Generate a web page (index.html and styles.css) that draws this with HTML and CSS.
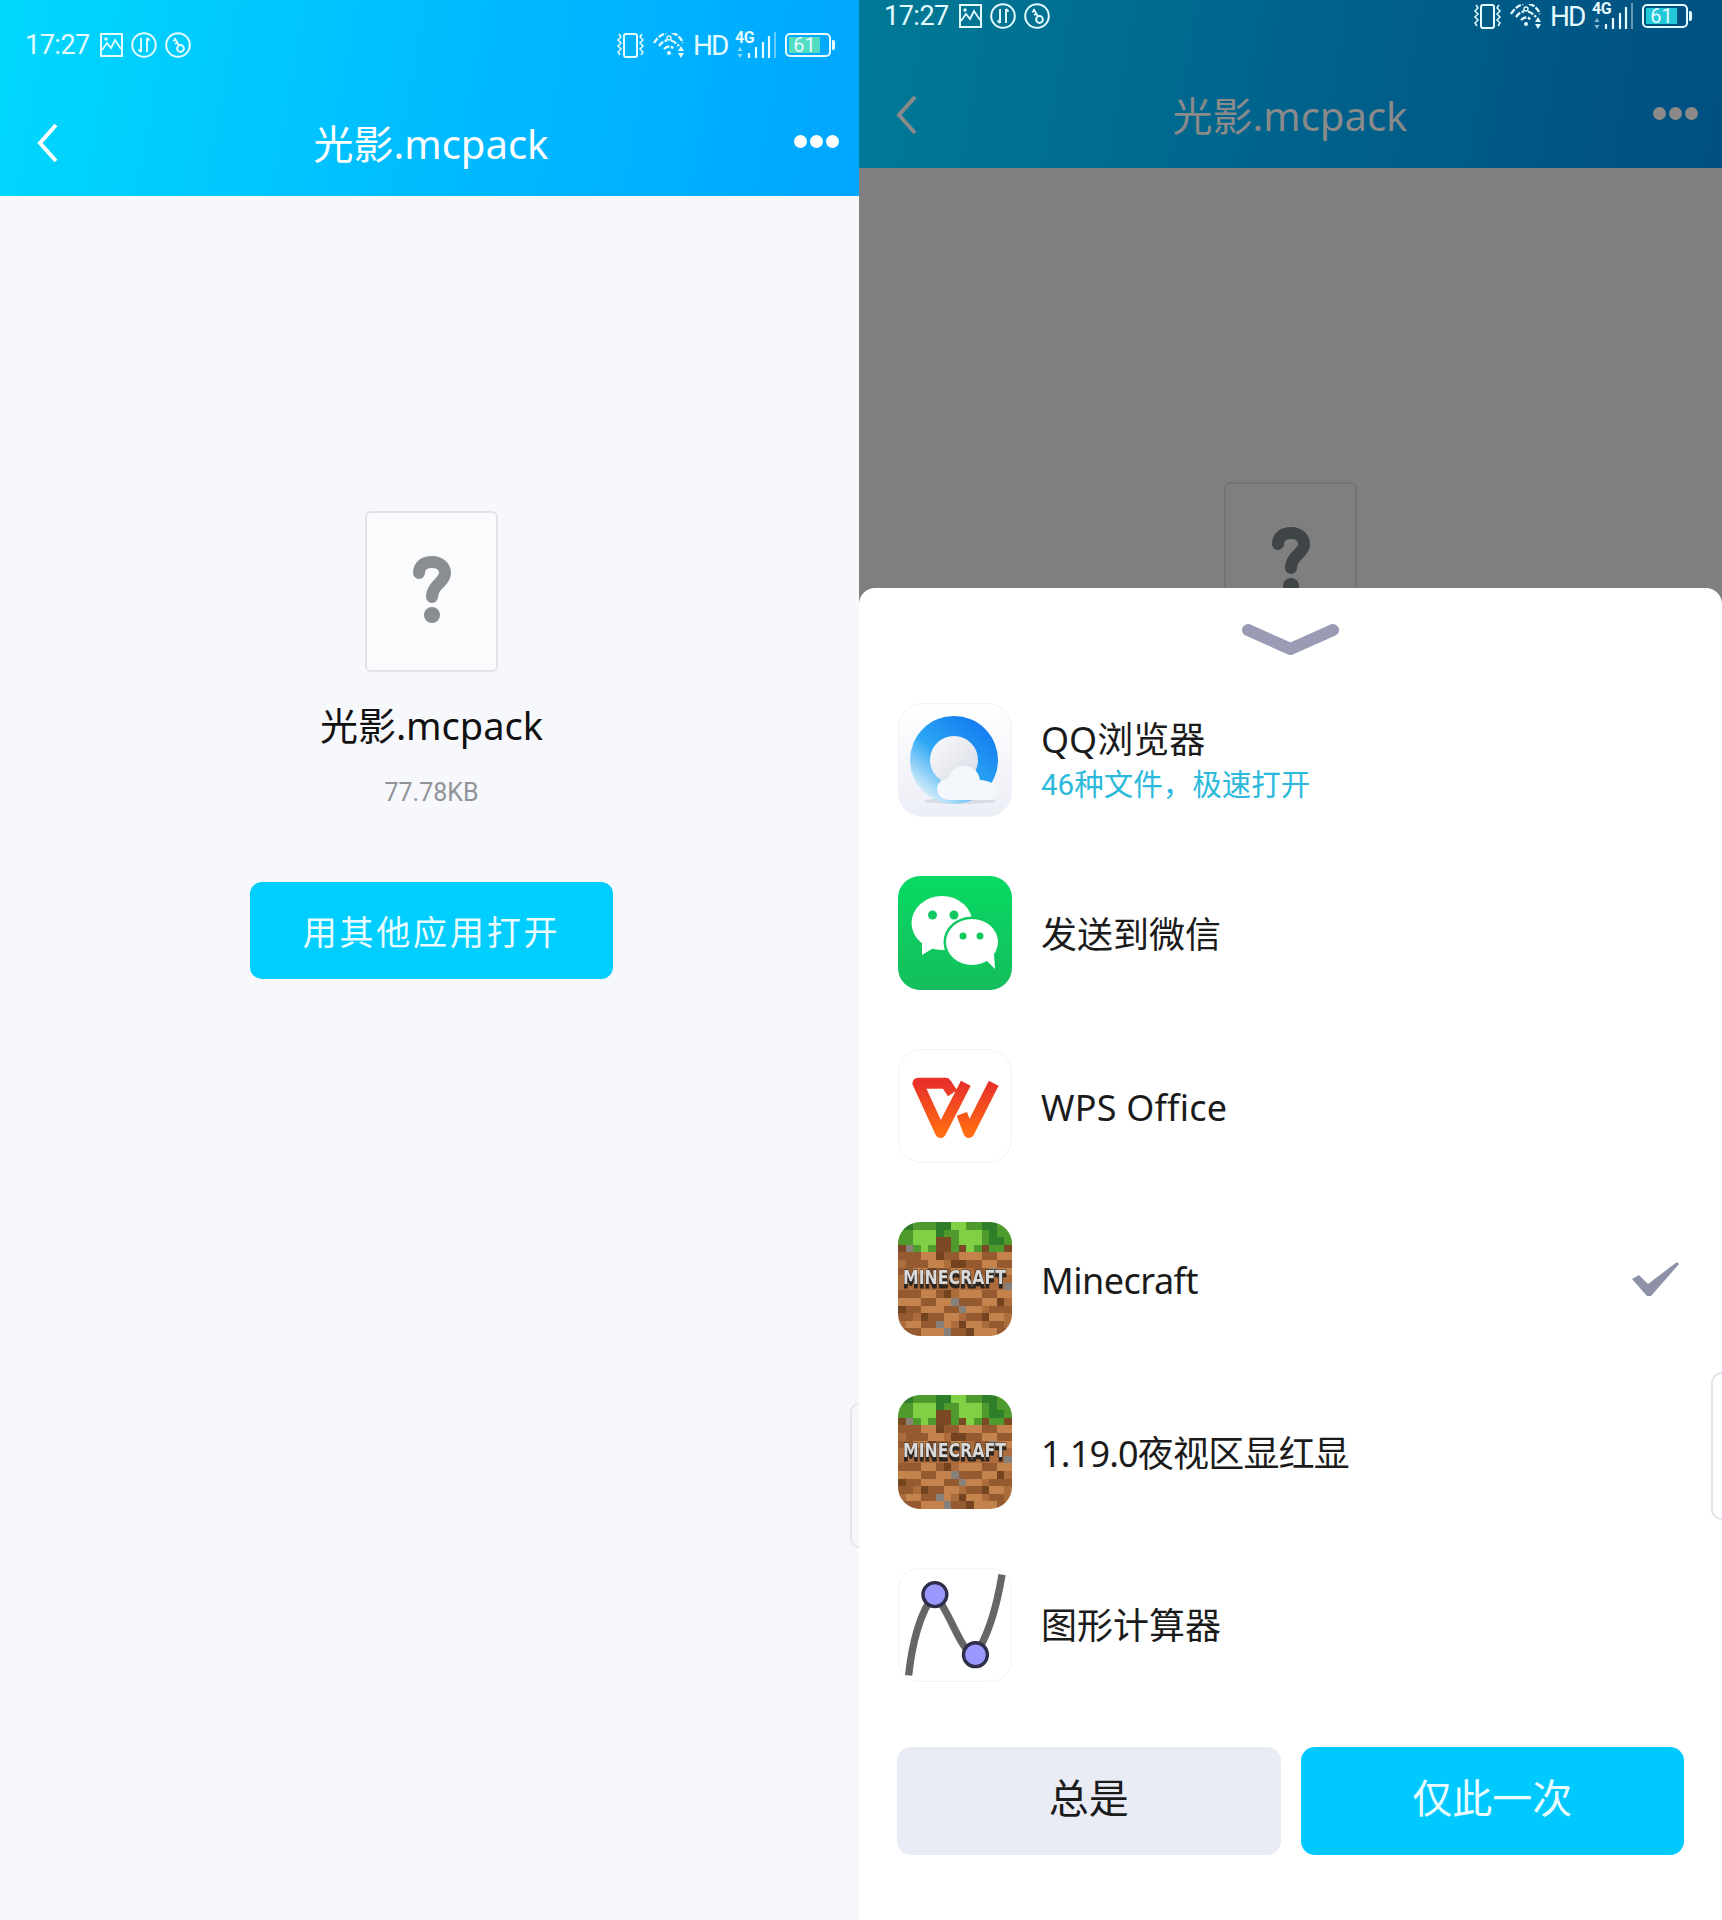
FILE: index.html
```html
<!DOCTYPE html>
<html lang="zh-CN">
<head>
  <meta charset="UTF-8" />
  <meta name="viewport" content="width=device-width, initial-scale=1.0" />
  <title>光影.mcpack</title>
  <link rel="stylesheet" href="styles.css">
</head>
<body>
  <svg class="sprites" width="0" height="0">
    <defs>
      <symbol id="sb-image" viewBox="0 0 23 24">
        <rect x="1" y="1" width="21" height="22" fill="none" stroke="currentColor" stroke-width="2"/>
        <path d="M2 17l5-7 4 5 4-8 6 9" fill="none" stroke="currentColor" stroke-width="1.800"/>
        <circle cx="6" cy="6" r="1.700" fill="currentColor"/>
      </symbol>
      <symbol id="sb-updown" viewBox="0 0 26 26">
        <circle cx="13" cy="13" r="11.800" fill="none" stroke="currentColor" stroke-width="2"/>
        <path d="M10 6v14M7.500 17.500l2.500 2.500M16 20V6M18.500 8.500L16 6" fill="none" stroke="currentColor" stroke-width="1.900"/>
      </symbol>
      <symbol id="sb-key" viewBox="0 0 26 26">
        <circle cx="13" cy="13" r="11.800" fill="none" stroke="currentColor" stroke-width="2"/>
        <circle cx="15.500" cy="16.500" r="3.400" fill="none" stroke="currentColor" stroke-width="2"/>
        <path d="M14 13.500L9.500 6M8 9l3-1.500M10 12l3-1.500" fill="none" stroke="currentColor" stroke-width="1.900"/>
      </symbol>
      <symbol id="sb-vibrate" viewBox="0 0 29 25">
        <rect x="8" y="1" width="13" height="23" rx="2" fill="none" stroke="currentColor" stroke-width="2"/>
        <path d="M3 1l2 3-3 3 3 3-3 3 3 3-3 3 2 3M26 1l-2 3 3 3-3 3 3 3-3 3 3 3-2 3" fill="none" stroke="currentColor" stroke-width="1.500"/>
      </symbol>
      <symbol id="sb-wifi" viewBox="0 0 32 25">
        <path d="M1 10C6 2 11 1 13 0M19 0c4 1 8 3 11 10M6 13c3-4 5-5 8-5.500M18 7.500c3 1 6 3 8 5.500M11 16c2-2 3-2.500 5-2.500s3 .5 4 2" fill="none" stroke="currentColor" stroke-width="2.300" stroke-dasharray="6 1.500"/>
        <circle cx="16" cy="5" r="2" fill="none" stroke="currentColor" stroke-width="1.400"/>
        <circle cx="16" cy="20" r="2" fill="currentColor"/>
        <path d="M28 13l3 5h-6zM28 25l3-5h-6z" fill="currentColor"/>
      </symbol>
      <symbol id="sb-bars" viewBox="0 0 36 22">
        <path d="M5 11l2.500 4h-5zM5 22l2.500-4h-5z" fill="currentColor" opacity=".6"/>
        <path d="M14 22v-5M21 22V11M28 22V6M34 22V0" stroke="currentColor" stroke-width="2.200"/>
      </symbol>

      <symbol id="mc-icon" viewBox="0 0 114 114">
        <svg x="0" y="0" width="114" height="114" viewBox="0 0 15 15" shape-rendering="crispEdges">
          <rect width="15" height="15" fill="#ad6c3c"/>
          <g fill="none" stroke-width="1">
            <path stroke="#955a30" d="M0 4.500h3M6 4.500h2M11 4.500h2M1 5.500h3M9 5.500h2M13 5.500h2M0 6.500h2M5 6.500h2M10 6.500h3M0 9.500h3M5 9.500h2M11 9.500h3M3 10.500h2M8 10.500h3M1 11.500h2M6 11.500h3M12 11.500h3M0 12.500h2M4 12.500h2M9 12.500h3M3 13.500h2M12 13.500h2M0 14.500h3M7 14.500h2M13 14.500h2"/>
            <path stroke="#74431f" d="M5 4.500h1M7 5.500h2M4 6.500h1M6 9.500h1M13 10.500h1M0 11.500h1M3 12.500h1M11 12.500h1M8 13.500h1M9 14.500h1"/>
            <path stroke="#c4834c" d="M3 4.500h2M8 4.500h3M13 4.500h2M4 5.500h2M11 5.500h2M2 6.500h2M7 6.500h2M13 6.500h2M3 9.500h2M8 9.500h3M13 9.500h2M0 10.500h3M5 10.500h2M11 10.500h2M3 11.500h3M9 11.500h2M6 12.500h2M12 12.500h2M1 13.500h2M5 13.500h2M9 13.500h2M3 14.500h3M10 14.500h3"/>
            <path stroke="#88807a" d="M1 3.500h1M12 6.500h1M7 10.500h1M8 11.500h1M5 13.500h1M6 14.500h1M14 8.500h1"/>
            <path stroke="#4f9a2c" d="M0 0.500h15M0 1.500h15M0 2.500h5M7 2.500h8M2 3.500h3M7 3.500h1M9 3.500h2M12 3.500h2"/>
            <path stroke="#7fd044" d="M7 0.500h2M2 1.500h3M8 1.500h3M2 2.500h3M8 2.500h3M3 3.500h1M9 3.500h1"/>
            <path stroke="#2f7f2a" d="M0 0.500h2M5 0.500h2M11 0.500h2M5 1.500h1M12 2.500h2M12 1.500h1"/>
            <path stroke="#7b4a25" d="M5 2.500h2M0 3.500h1M5 3.500h2M8 3.500h1M11 3.500h1M14 3.500h1"/>
          </g>
        </svg>
        <text class="mc-word" x="5" y="62" textLength="103" lengthAdjust="spacingAndGlyphs">MINECRAFT</text>
      </symbol>
    </defs>
  </svg>

  <div class="screen">
    <section class="panel panel-file">
      <header class="topbar">
        <div class="status">
          <span class="status-time">17:27</span>
          <svg class="sb-image"><use href="#sb-image"/></svg>
          <svg class="sb-circle"><use href="#sb-updown"/></svg>
          <svg class="sb-circle"><use href="#sb-key"/></svg>
          <span class="status-gap"></span>
          <svg class="sb-vibrate"><use href="#sb-vibrate"/></svg>
          <svg class="sb-wifi"><use href="#sb-wifi"/></svg>
          <span class="status-hd">HD</span>
          <span class="status-signal"><b>4G</b><svg class="sb-bars"><use href="#sb-bars"/></svg></span>
          <span class="status-divider"></span>
          <span class="battery"><span class="battery-level">61</span></span>
        </div>
        <nav class="navbar">
          <svg class="nav-back" viewBox="0 0 21 40"><path d="M19 2L3 20l16 18" fill="none" stroke="currentColor" stroke-width="4"/></svg>
          <h1 class="nav-title">光影.mcpack</h1>
          <span class="nav-more"><i></i><i></i><i></i></span>
        </nav>
      </header>

      <main class="file-view">
        <div class="file-card">
          <svg class="file-mark" viewBox="0 0 38 67"><path d="M6 17C6 9 12 6 19 6c8 0 13 5 13 11 0 7-7 10-10 15-2 3-3 5-3 9" fill="none" stroke="currentColor" stroke-width="12" stroke-linecap="round"/><circle cx="19" cy="59" r="8" fill="currentColor"/></svg>
        </div>
        <p class="file-name">光影.mcpack</p>
        <p class="file-size">77.78KB</p>
        <button class="open-btn">用其他应用打开</button>
      </main>
      <div class="side-handle"></div>
    </section>

    <section class="panel panel-chooser">
      <header class="topbar">
        <div class="status">
          <span class="status-time">17:27</span>
          <svg class="sb-image"><use href="#sb-image"/></svg>
          <svg class="sb-circle"><use href="#sb-updown"/></svg>
          <svg class="sb-circle"><use href="#sb-key"/></svg>
          <span class="status-gap"></span>
          <svg class="sb-vibrate"><use href="#sb-vibrate"/></svg>
          <svg class="sb-wifi"><use href="#sb-wifi"/></svg>
          <span class="status-hd">HD</span>
          <span class="status-signal"><b>4G</b><svg class="sb-bars"><use href="#sb-bars"/></svg></span>
          <span class="status-divider"></span>
          <span class="battery"><span class="battery-level">61</span></span>
        </div>
        <nav class="navbar">
          <svg class="nav-back" viewBox="0 0 21 40"><path d="M19 2L3 20l16 18" fill="none" stroke="currentColor" stroke-width="4"/></svg>
          <h1 class="nav-title">光影.mcpack</h1>
          <span class="nav-more"><i></i><i></i><i></i></span>
        </nav>
      </header>

      <div class="dim-area">
        <div class="file-card">
          <svg class="file-mark" viewBox="0 0 38 67"><path d="M6 17C6 9 12 6 19 6c8 0 13 5 13 11 0 7-7 10-10 15-2 3-3 5-3 9" fill="none" stroke="currentColor" stroke-width="12" stroke-linecap="round"/><circle cx="19" cy="59" r="8" fill="currentColor"/></svg>
        </div>
      </div>

      <div class="sheet">
        <div class="sheet-head">
          <svg class="sheet-chevron" viewBox="0 0 97 31"><path d="M6 6l42.500 19L91 6" fill="none" stroke="#9a9bb5" stroke-width="12" stroke-linecap="round"/></svg>
        </div>

        <ul class="app-list">
          <li class="app-row">
            <svg class="app-icon" viewBox="0 0 114 114">
              <defs>
                <linearGradient id="qq-tile" x1="0" y1="0" x2="0" y2="1"><stop offset="0" stop-color="#fff"/><stop offset="1" stop-color="#eceef6"/></linearGradient>
                <linearGradient id="qq-ring" x1=".9" y1=".1" x2=".2" y2=".95"><stop offset="0" stop-color="#1279f0"/><stop offset=".55" stop-color="#2ba6f4"/><stop offset="1" stop-color="#dff1fb"/></linearGradient>
                <linearGradient id="qq-core" x1="0" y1="0" x2="1" y2="1"><stop offset="0" stop-color="#fbfbfd"/><stop offset="1" stop-color="#d7dae4"/></linearGradient>
              </defs>
              <rect x=".5" y=".5" width="113" height="113" rx="24" fill="url(#qq-tile)" stroke="#f1f2f7"/>
              <ellipse cx="62" cy="98" rx="36" ry="3" fill="#d9dbe6"/>
              <circle cx="56" cy="57" r="44" fill="url(#qq-ring)"/>
              <circle cx="56" cy="57" r="24" fill="url(#qq-core)"/>
              <path d="M52 97c-8 0-13-5-13-11s5-10 11-10c2-8 8-13 16-13 9 0 15 6 16 14 9 0 18 5 18 11 0 6-5 9-11 9z" fill="#f4f8fc"/>
            </svg>
            <div class="app-text">
              <span class="app-name">QQ浏览器</span>
              <span class="app-note">46种文件，极速打开</span>
            </div>
          </li>

          <li class="app-row">
            <svg class="app-icon" viewBox="0 0 114 114">
              <defs>
                <linearGradient id="wx-tile" x1="0" y1="0" x2="0" y2="1"><stop offset="0" stop-color="#08da64"/><stop offset="1" stop-color="#14bd5b"/></linearGradient>
              </defs>
              <rect width="114" height="114" rx="22" fill="url(#wx-tile)"/>
              <ellipse cx="44" cy="47" rx="30.500" ry="27" fill="#fff"/>
              <path d="M24 66l0 13 13-8z" fill="#fff"/>
              <circle cx="34.500" cy="39" r="4.500" fill="#10c860"/>
              <circle cx="56" cy="39" r="4.500" fill="#10c860"/>
              <ellipse cx="74" cy="66" rx="28.500" ry="25.500" fill="#10c860"/>
              <ellipse cx="74" cy="66" rx="26" ry="23" fill="#fff"/>
              <path d="M88 84l9 9-1-15z" fill="#fff"/>
              <circle cx="65" cy="60" r="3.500" fill="#10c860"/>
              <circle cx="82" cy="60" r="3.500" fill="#10c860"/>
            </svg>
            <div class="app-text"><span class="app-name">发送到微信</span></div>
          </li>

          <li class="app-row">
            <svg class="app-icon" viewBox="52 55 343 343">
              <defs>
                <linearGradient id="wps-a" x1="0" y1="0" x2="0" y2="1"><stop offset="0" stop-color="#e7312a"/><stop offset="1" stop-color="#ff6b12"/></linearGradient>
                <linearGradient id="wps-b" x1="0" y1="0" x2="1" y2="0"><stop offset="0" stop-color="#ff9a35"/><stop offset=".4" stop-color="#d62b20"/><stop offset="1" stop-color="#e7312a"/></linearGradient>
              </defs>
              <rect x="54" y="57" width="339" height="339" rx="70" fill="#fff" stroke="#f1f1f3" stroke-width="3"/>
              <path d="M216 188l-20-30h-84l68 148 76-148" fill="none" stroke="url(#wps-a)" stroke-width="33" stroke-linejoin="round"/>
              <path d="M244 250l21 56 75-148" fill="none" stroke="url(#wps-a)" stroke-width="33" stroke-linejoin="round"/>
              <path d="M244 158h96" fill="none" stroke="url(#wps-b)" stroke-width="33" stroke-linecap="round"/>
            </svg>
            <div class="app-text"><span class="app-name app-name-wide">WPS Office</span></div>
          </li>

          <li class="app-row">
            <span class="mc-tile"><svg class="app-icon"><use href="#mc-icon"/></svg></span>
            <div class="app-text"><span class="app-name app-name-snug">Minecraft</span></div>
            <svg class="app-check" viewBox="0 0 47 34"><polygon points="0,17 7,13 16,22 45,0 47,2 19,34 15,34" fill="#8d92a8"/></svg>
          </li>

          <li class="app-row">
            <span class="mc-tile"><svg class="app-icon"><use href="#mc-icon"/></svg></span>
            <div class="app-text"><span class="app-name app-name-tight">1.19.0夜视区显红显</span></div>
          </li>

          <li class="app-row">
            <svg class="app-icon" viewBox="52 52 343 343">
              <rect x="54" y="54" width="339" height="339" rx="60" fill="#fff" stroke="#f2f2f4" stroke-width="3"/>
              <path d="M84 375c10-95 35-195 79-243 45 50 80 181 122 181 40-60 65-150 80-241" fill="none" stroke="#666" stroke-width="22"/>
              <circle cx="163" cy="132" r="36" fill="#9a97ff" stroke="#2e2e4a" stroke-width="10"/>
              <circle cx="285" cy="313" r="36" fill="#9a97ff" stroke="#2e2e4a" stroke-width="10"/>
            </svg>
            <div class="app-text"><span class="app-name">图形计算器</span></div>
          </li>
        </ul>

        <div class="sheet-actions">
          <button class="action action-always">总是</button>
          <button class="action action-once">仅此一次</button>
        </div>
      </div>
      <div class="side-handle"></div>
    </section>
  </div>
</body>
</html>
```

FILE: styles.css
```css
* {
  box-sizing: border-box;
}

body {
  margin: 0;
  font-family: "Roboto", "Noto Sans CJK SC", sans-serif;
  background: #f7f8fb;
}

.sprites {
  position: absolute;
}

.screen {
  display: flex;
  height: 1920px;
  overflow: hidden;
}

.panel {
  position: relative;
  display: flex;
  flex-direction: column;
  height: 1920px;
}

.panel-file {
  width: 859px;
  background: #f7f8fb;
}

.panel-chooser {
  width: 863px;
  background: #7f7f7f;
}

/* header */
.topbar {
  color: #fff;
}

.panel-file .topbar {
  height: 196px;
  background: linear-gradient(100deg, #00d8fd 0%, #00bcff 50%, #00a6ff 100%);
}

.panel-chooser .topbar {
  height: 168px;
  background: linear-gradient(100deg, #007a96 0%, #00638c 50%, #004f80 100%);
}

.status {
  display: flex;
  align-items: center;
  height: 90px;
  padding: 0 25px;
  gap: 8px;
  color: #e4fbff;
}

.panel-chooser .status {
  height: 32px;
  margin-bottom: 30px;
  padding-right: 31px;
}

.status-time {
  font-size: 27px;
  margin-right: 2px;
  letter-spacing: -0.5px;
}

.sb-image {
  width: 23px;
  height: 24px;
}

.sb-circle {
  width: 26px;
  height: 26px;
}

.status-gap {
  flex: 1;
}

.sb-vibrate {
  width: 29px;
  height: 25px;
}

.sb-wifi {
  width: 32px;
  height: 25px;
}

.status-hd {
  font-size: 28px;
  letter-spacing: -2px;
  width: 34px;
}

.status-signal {
  position: relative;
  width: 36px;
  height: 26px;
  margin-right: -5px;
}

.status-signal b {
  position: absolute;
  left: 0;
  top: -2px;
  font-size: 16px;
  line-height: 16px;
  letter-spacing: -0.5px;
}

.sb-bars {
  position: absolute;
  left: 0;
  bottom: 0;
  width: 36px;
  height: 22px;
}

.status-divider {
  width: 2px;
  height: 26px;
  background: rgba(255, 255, 255, 0.4);
  margin-right: 1px;
}

.battery {
  position: relative;
  display: block;
  width: 46px;
  height: 24px;
  padding: 2px;
  border: 2px solid currentColor;
  border-radius: 5px;
  margin-right: 3px;
}

.battery::after {
  content: "";
  position: absolute;
  right: -6px;
  top: 5px;
  width: 3px;
  height: 10px;
  background: currentColor;
  border-radius: 0 2px 2px 0;
}

.battery-level {
  display: block;
  width: 31px;
  height: 16px;
  background: #52dcc2;
  color: #e4fbff;
  font-size: 20px;
  line-height: 16px;
  text-align: center;
}

.panel-chooser .battery-level {
  background: #22c8d8;
}

.navbar {
  display: grid;
  grid-template-columns: 1fr auto 1fr;
  align-items: center;
  height: 106px;
  padding: 0 20px 0 23px;
}

.panel-chooser .navbar {
  padding-right: 24px;
  color: #8a8a8a;
}

.nav-back {
  width: 21px;
  height: 40px;
  margin-left: 14px;
  margin-top: -1px;
}

.nav-title {
  margin: 2px 0 0;
  font-family: "Noto Sans", "Noto Sans CJK SC", sans-serif;
  font-size: 40px;
  font-weight: 400;
  line-height: 50px;
}

.nav-more {
  display: flex;
  justify-content: flex-end;
  gap: 3px;
  margin-top: -3px;
}

.nav-more i {
  width: 13px;
  height: 13px;
  border-radius: 50%;
  background: currentColor;
}

/* file view */
.file-view {
  display: flex;
  flex-direction: column;
  align-items: center;
  padding: 315px 0 0 4px;
}

.file-card {
  display: flex;
  align-items: flex-start;
  justify-content: center;
  flex: none;
  width: 133px;
  height: 161px;
  padding-top: 43px;
  border: 2px solid #e1e3e8;
  border-radius: 6px;
  background: #fafbfc;
  color: #8a8d91;
}

.file-mark {
  width: 38px;
  height: 67px;
}

.file-name {
  margin: 28px 0 0;
  font-family: "Noto Sans", "Noto Sans CJK SC", sans-serif;
  font-size: 38px;
  line-height: 50px;
  color: #111;
}

.file-size {
  margin: 26px 0 0;
  font-size: 25px;
  line-height: 34px;
  color: #909398;
}

.open-btn {
  width: 363px;
  height: 97px;
  margin-top: 72px;
  border: none;
  border-radius: 12px;
  background: #00ceff;
  color: #eafcff;
  font-family: inherit;
  font-size: 34px;
  letter-spacing: 2.800px;
}

/* chooser */
.dim-area {
  display: flex;
  justify-content: center;
  height: 420px;
  padding-top: 314px;
  overflow: hidden;
}

.dim-area .file-card {
  border-color: #747474;
  background: #7f7f7f;
  color: #3f4446;
}

.sheet {
  flex: 1;
  padding: 0 38px;
  border-radius: 16px 16px 0 0;
  background: #fff;
}

.sheet-head {
  display: flex;
  justify-content: center;
  height: 86px;
  padding-top: 36px;
}

.sheet-chevron {
  width: 97px;
  height: 31px;
}

.app-list {
  margin: 0;
  padding: 0 0 0 1px;
  list-style: none;
}

.app-row {
  display: flex;
  align-items: center;
  height: 172.900px;
}

.app-icon {
  display: block;
  flex: none;
  width: 114px;
  height: 114px;
}

.mc-tile {
  flex: none;
  width: 114px;
  height: 114px;
  border-radius: 22px;
  overflow: hidden;
}

.mc-tile .app-icon {
  filter: blur(0.7px);
}

.mc-word {
  font-family: "DejaVu Sans", sans-serif;
  font-size: 19px;
  font-weight: 700;
  fill: #dadada;
  stroke: #2e2824;
  stroke-width: 1px;
  paint-order: stroke;
  filter: drop-shadow(0 4px 0 #2b2522);
}

.app-text {
  display: flex;
  flex-direction: column;
  flex: 1;
  margin-left: 29px;
}

.app-name {
  font-family: "Noto Sans", "Noto Sans CJK SC", sans-serif;
  font-size: 36px;
  line-height: 46px;
  color: #1b1b1b;
  padding-top: 3px;
}

.app-name-wide {
  letter-spacing: 0.200px;
}

.app-name-snug {
  letter-spacing: -0.500px;
}

.app-name-tight {
  letter-spacing: -0.800px;
}

.app-note {
  font-size: 29.500px;
  line-height: 42px;
  color: #2cb9dc;
  padding-top: 1px;
}

.app-check {
  flex: none;
  width: 47px;
  height: 34px;
  margin-right: 5px;
}

.sheet-actions {
  display: grid;
  grid-template-columns: 1fr 1fr;
  gap: 20px;
  margin-top: 36px;
}

.action {
  height: 108px;
  padding-bottom: 12px;
  border: none;
  border-radius: 14px;
  font-family: inherit;
  font-size: 40px;
}

.action-always {
  background: #e9ecf4;
  color: #1b1b1b;
}

.action-once {
  background: #00c9ff;
  color: #eafcff;
}

/* floating edge tab */
.side-handle {
  position: absolute;
  right: 0;
  top: 1403px;
  width: 9px;
  height: 145px;
  border: 2px solid #e4e6ec;
  border-right: none;
  border-radius: 20px 0 0 20px;
}

.panel-chooser .side-handle {
  top: 1372px;
  width: 11px;
  height: 148px;
}
```
